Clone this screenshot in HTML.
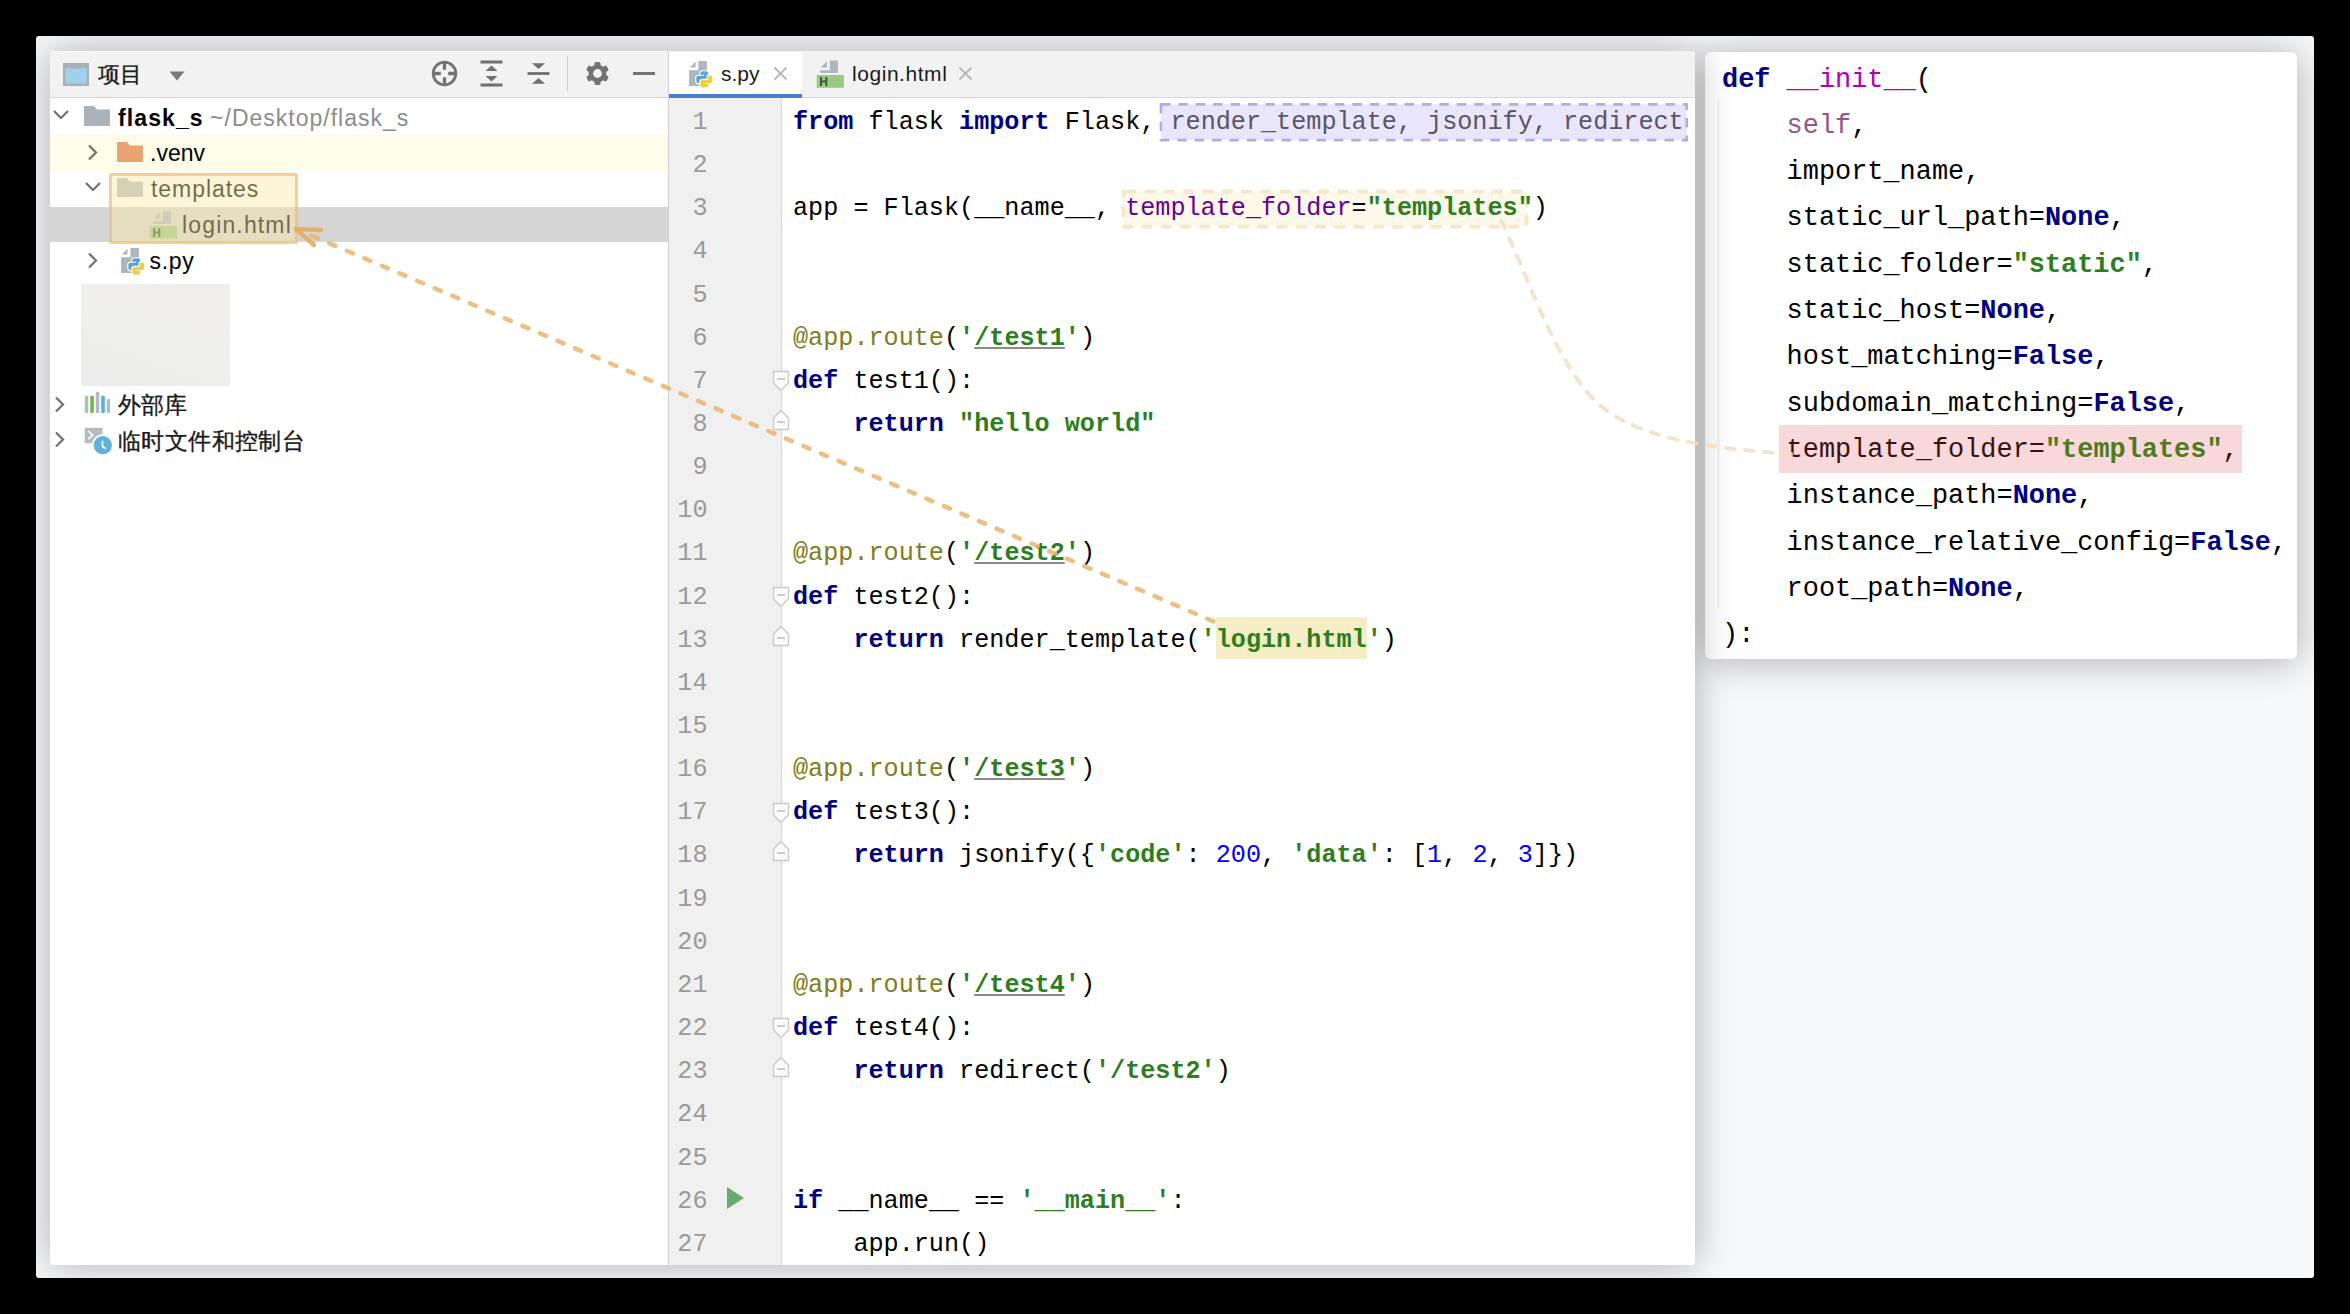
<!DOCTYPE html>
<html><head><meta charset="utf-8">
<style>
html,body{margin:0;padding:0}
body{width:2350px;height:1314px;background:#000;position:relative;overflow:hidden;font-family:"Liberation Sans",sans-serif}
.a{position:absolute}
#frame{left:36px;top:36px;width:2278px;height:1242px;background:#f7f8fa;border-radius:3px;overflow:hidden}
#mainpanel{left:50px;top:51px;width:1645px;height:1214px;background:#fff;border-radius:3px;box-shadow:0 0 38px 0 rgba(0,0,0,0.30)}
#popup{left:1705px;top:52px;width:592px;height:607px;background:#fff;border-radius:6px;box-shadow:0 2px 38px 0 rgba(0,0,0,0.30);overflow:hidden}
/* project toolbar */
#ptool{left:50px;top:51px;width:618px;height:46px;background:#f2f2f2;border-bottom:1px solid #d6d6d6;border-top-left-radius:3px}
#etool{left:669px;top:51px;width:1026px;height:46px;background:#f2f2f2;border-bottom:1px solid #d6d6d6;border-top-right-radius:3px}
#vdiv{left:668px;top:51px;width:1px;height:1214px;background:#d0d0d0}
#gutter{left:669px;top:98px;width:112px;height:1167px;background:#f0f0f0}
#gline{left:781px;top:98px;width:1px;height:1167px;background:#d9d9d9}
.gn{position:absolute;left:0;width:707.5px;text-align:right;font-family:"Liberation Mono",monospace;font-size:25.163px;line-height:43.15px;color:#9a9a9a;white-space:pre}
#gnwrap{left:0;top:0}
.cl{position:absolute;left:793.00px;font-family:"Liberation Mono",monospace;font-size:25.163px;line-height:43.15px;color:#000;white-space:pre}
.pl{position:absolute;left:1722.00px;font-family:"Liberation Mono",monospace;font-size:26.913px;line-height:46.3px;color:#000;white-space:pre}
.kw{color:#000080;font-weight:bold}
.st{color:#2f7d21;font-weight:bold}
.stu{color:#2f7d21;font-weight:bold;text-decoration:underline;text-decoration-color:#8a8a8a;text-underline-offset:2px;text-decoration-thickness:1.6px}
.sth{color:#2f7d21;font-weight:bold}
.nu{color:#0000ff}
.de{color:#7d7d22}
.ka{color:#660099}
.se{color:#94558d}
.fn{color:#b200b2}
.un{color:#595468}
.hl{color:#3a1010}
.hls{color:#4f7a1f;font-weight:bold}
.fold{position:absolute;left:772px}
.tree{position:absolute;font-size:23px;line-height:36px;white-space:pre;color:#000}
.cjk{position:absolute;font-size:23px;line-height:36px;white-space:pre;color:#1a1a1a;-webkit-text-stroke:0.35px #1a1a1a}
</style></head><body>
<div id="frame" class="a"></div>
<div id="popup" class="a"></div>
<div id="mainpanel" class="a"></div>
<div class="a" style="left:1717.5px;top:100px;width:1.2px;height:508px;background:#dcdcdc"></div>

<!-- ============ PROJECT PANEL ============ -->
<div id="ptool" class="a"></div>
<div class="a" style="left:52px;top:51px;width:614px;height:1px;background:#fafafa"></div>
<!-- project icon -->
<svg class="a" style="left:63px;top:63px" width="26" height="23" viewBox="0 0 26 23"><rect x="0" y="0" width="26" height="23" fill="#a9b1b8"/><rect x="2.5" y="5.5" width="21" height="15" fill="#9fd2ea"/></svg>
<div class="cjk" style="left:98px;top:57px;font-size:22px;color:#222">项目</div>
<svg class="a" style="left:168px;top:70px" width="18" height="12" viewBox="0 0 18 12"><path d="M1.5 1.5H16.5L9 10.5Z" fill="#7a7a7a"/></svg>
<!-- locate -->
<svg class="a" style="left:431px;top:60px" width="27" height="27" viewBox="0 0 27 27"><circle cx="13.5" cy="13.5" r="11.3" fill="none" stroke="#737373" stroke-width="2.8"/><path d="M13.5 2V9.8M13.5 17.2V25M2 13.5H9.8M17.2 13.5H25" stroke="#737373" stroke-width="3.3"/></svg>
<!-- expand all -->
<svg class="a" style="left:480px;top:60px" width="23" height="27" viewBox="0 0 23 27"><path d="M0.5 2H22.5M0.5 25H22.5" stroke="#707070" stroke-width="2.8"/><path d="M5.5 11L11.5 5.5L17.5 11Z M5.5 16L11.5 21.5L17.5 16Z" fill="#707070"/></svg>
<!-- collapse all -->
<svg class="a" style="left:527px;top:62px" width="23" height="23" viewBox="0 0 23 23"><path d="M0.5 11.5H22.5" stroke="#707070" stroke-width="2.8"/><path d="M5 1.2H18L11.5 7Z M5 21.8H18L11.5 16Z" fill="#707070"/></svg>
<div class="a" style="left:567px;top:56px;width:1px;height:35px;background:#cfcfcf"></div>
<!-- gear -->
<svg class="a" style="left:585px;top:61px" width="25" height="25" viewBox="0 0 25 25"><g fill="#737373" transform="translate(12.5 12.5)"><circle r="9"/><rect x="-3" y="-11.6" width="6" height="23.2" rx="1.6"/><rect x="-3" y="-11.6" width="6" height="23.2" rx="1.6" transform="rotate(60)"/><rect x="-3" y="-11.6" width="6" height="23.2" rx="1.6" transform="rotate(120)"/></g><circle cx="12.5" cy="12.5" r="4.4" fill="#f2f2f2"/></svg>
<div class="a" style="left:633px;top:71.8px;width:22px;height:3.4px;background:#737373"></div>

<!-- tree rows -->
<div class="a" style="left:50px;top:134.5px;width:618px;height:36px;background:#fdfce8"></div>
<div class="a" style="left:50px;top:206.5px;width:618px;height:35.5px;background:#d5d5d5"></div>
<!-- chevrons -->
<svg class="a" style="left:52px;top:108px" width="18" height="14" viewBox="0 0 18 14"><path d="M2 3L9 10L16 3" fill="none" stroke="#707070" stroke-width="2.2"/></svg>
<svg class="a" style="left:86px;top:144px" width="13" height="17" viewBox="0 0 13 17"><path d="M3 1.5L10 8.5L3 15.5" fill="none" stroke="#707070" stroke-width="2.2"/></svg>
<svg class="a" style="left:84px;top:180px" width="18" height="14" viewBox="0 0 18 14"><path d="M2 3L9 10L16 3" fill="none" stroke="#707070" stroke-width="2.2"/></svg>
<svg class="a" style="left:86px;top:252px" width="13" height="17" viewBox="0 0 13 17"><path d="M3 1.5L10 8.5L3 15.5" fill="none" stroke="#707070" stroke-width="2.2"/></svg>
<svg class="a" style="left:53px;top:396px" width="13" height="17" viewBox="0 0 13 17"><path d="M3 1.5L10 8.5L3 15.5" fill="none" stroke="#707070" stroke-width="2.2"/></svg>
<svg class="a" style="left:53px;top:431px" width="13" height="17" viewBox="0 0 13 17"><path d="M3 1.5L10 8.5L3 15.5" fill="none" stroke="#707070" stroke-width="2.2"/></svg>
<!-- folder icons -->
<svg class="a" style="left:84px;top:106px" width="26" height="20" viewBox="0 0 26 20"><path d="M0 0H10L13 3.5H26V20H0Z" fill="#aab2ba"/></svg>
<svg class="a" style="left:117px;top:141.5px" width="26" height="20" viewBox="0 0 26 20"><path d="M0 0H10L13 3.5H26V20H0Z" fill="#eaa474"/></svg>
<svg class="a" style="left:117px;top:178px" width="26" height="19" viewBox="0 0 26 19"><path d="M0 0H10L13 3.5H26V19H0Z" fill="#b7bcc2"/></svg>
<!-- html file icon -->
<svg class="a" style="left:149px;top:211.3px" width="29" height="29" viewBox="0 0 29 29"><path d="M4.8 7.5H10.9V1.2Z" fill="#adb5bd"/><path d="M13.8 0.4H21.9V13.1H4.2V10.2H13.8Z" fill="#adb5bd"/><rect x="0.7" y="15" width="27.2" height="12.8" fill="#9bc784"/><path d="M5 17.1V25.9M10.3 17.1V25.9M5 21.5H10.3" stroke="#46573a" stroke-width="2"/></svg>
<!-- python file icon -->
<svg class="a" style="left:120px;top:247.1px" width="26" height="29" viewBox="0 0 26 29"><path d="M2 7.5H7.5V1.5Z" fill="#adb5bd"/><path d="M10.4 0.9H18.9V26H1.1V10.2H10.4Z" fill="#adb5bd"/><g stroke="#fff" stroke-width="2.2" stroke-linejoin="round" paint-order="stroke"><path transform="translate(8.3 11.3)" d="M6 0H9.5Q12 0 12 2.5V6Q12 7.5 10.5 7.5H6Q4.5 7.5 4.5 9V12H2.5Q0 12 0 9.5V6.5Q0 4.5 2 4.5H7.5V3.5H4V2Q4 0 6 0Z" fill="#5fa3d6"/><path transform="translate(24.3 27.5) rotate(180)" d="M6 0H9.5Q12 0 12 2.5V6Q12 7.5 10.5 7.5H6Q4.5 7.5 4.5 9V12H2.5Q0 12 0 9.5V6.5Q0 4.5 2 4.5H7.5V3.5H4V2Q4 0 6 0Z" fill="#f4cd40"/></g></svg>
<!-- tree text -->
<div class="tree" style="left:118px;top:99.5px"><b style="letter-spacing:1.1px">flask_s</b> <span style="color:#8c8c8c;letter-spacing:1.0px">~/Desktop/flask_s</span></div>
<div class="tree" style="left:150px;top:134.5px;letter-spacing:0px">.venv</div>
<div class="tree" style="left:151px;top:170.5px;letter-spacing:0.95px">templates</div>
<div class="tree" style="left:182px;top:206.5px;letter-spacing:1.15px">login.html</div>
<div class="tree" style="left:149.5px;top:242.5px;letter-spacing:0.7px">s.py</div>
<!-- blurred box -->
<div class="a" style="left:81px;top:284px;width:149px;height:102px;background:linear-gradient(20deg,#ebeceb,#efefed 55%,#efeeea)"></div>
<!-- libraries icon -->
<svg class="a" style="left:84px;top:391px" width="27" height="23" viewBox="0 0 27 23"><g rx="1"><rect x="0.8" y="4.8" width="3.5" height="17.2" rx="1" fill="#b3bac1"/><rect x="6.3" y="4.8" width="3.5" height="17.2" rx="1" fill="#6db24a"/><rect x="11.8" y="0.8" width="3.6" height="21.2" rx="1" fill="#b3bac1"/><rect x="17.2" y="4.8" width="3.6" height="17.2" rx="1" fill="#5aaedf"/><rect x="22.7" y="8" width="3.4" height="14" rx="1" fill="#b3bac1"/></g></svg>
<div class="cjk" style="left:118px;top:387px">外部库</div>
<!-- scratches icon -->
<svg class="a" style="left:84px;top:427px" width="30" height="29" viewBox="0 0 30 29"><rect x="0.8" y="0.8" width="17.7" height="15.4" fill="#b3bac1"/><path d="M4 4L8.8 8.2L4 12.2" fill="none" stroke="#fff" stroke-width="1.6"/><circle cx="18.8" cy="18.2" r="9.1" fill="#5eb2de" stroke="#fff" stroke-width="3.6" paint-order="stroke"/><path d="M18.5 13.8V19.5L21.8 21.6" fill="none" stroke="#fff" stroke-width="1.7"/></svg>
<div class="cjk" style="left:118px;top:423px;letter-spacing:0.4px">临时文件和控制台</div>
<!-- orange highlight box -->
<div class="a" style="left:109px;top:173px;width:189px;height:71px;box-sizing:border-box;border:3px solid rgba(240,186,110,0.62);background:rgba(252,232,170,0.45);border-radius:2px"></div>

<!-- ============ EDITOR ============ -->
<div id="etool" class="a"></div>
<div class="a" style="left:669px;top:52px;width:133px;height:46px;background:#fff"></div>
<div class="a" style="left:669px;top:93.5px;width:133px;height:4.5px;background:#4a7ec6"></div>
<div id="vdiv" class="a"></div>
<!-- tab icons -->
<svg class="a" style="left:688px;top:60px" width="26" height="29" viewBox="0 0 26 29"><path d="M2 7.5H7.5V1.5Z" fill="#adb5bd"/><path d="M10.4 0.9H18.9V26H1.1V10.2H10.4Z" fill="#adb5bd"/><g stroke="#fff" stroke-width="2.2" stroke-linejoin="round" paint-order="stroke"><path transform="translate(8.3 11.3)" d="M6 0H9.5Q12 0 12 2.5V6Q12 7.5 10.5 7.5H6Q4.5 7.5 4.5 9V12H2.5Q0 12 0 9.5V6.5Q0 4.5 2 4.5H7.5V3.5H4V2Q4 0 6 0Z" fill="#5fa3d6"/><path transform="translate(24.3 27.5) rotate(180)" d="M6 0H9.5Q12 0 12 2.5V6Q12 7.5 10.5 7.5H6Q4.5 7.5 4.5 9V12H2.5Q0 12 0 9.5V6.5Q0 4.5 2 4.5H7.5V3.5H4V2Q4 0 6 0Z" fill="#f4cd40"/></g></svg>
<div class="tree" style="left:721px;top:56px;font-size:21px;color:#1a1a1a">s.py</div>
<svg class="a" style="left:773px;top:66px" width="15" height="15" viewBox="0 0 15 15"><path d="M1.5 1.5L13.5 13.5M13.5 1.5L1.5 13.5" stroke="#b8b8b8" stroke-width="1.8"/></svg>
<svg class="a" style="left:816px;top:60px" width="29" height="29" viewBox="0 0 29 29"><path d="M4.8 7.5H10.9V1.2Z" fill="#adb5bd"/><path d="M13.8 0.4H21.9V13.1H4.2V10.2H13.8Z" fill="#adb5bd"/><rect x="0.7" y="15" width="27.2" height="12.8" fill="#9bc784"/><path d="M5 17.1V25.9M10.3 17.1V25.9M5 21.5H10.3" stroke="#46573a" stroke-width="2"/></svg>
<div class="tree" style="left:852px;top:56px;font-size:21px;color:#1a1a1a;letter-spacing:0.55px">login.html</div>
<svg class="a" style="left:958px;top:66px" width="15" height="15" viewBox="0 0 15 15"><path d="M1.5 1.5L13.5 13.5M13.5 1.5L1.5 13.5" stroke="#b8b8b8" stroke-width="1.8"/></svg>

<div id="gutter" class="a"></div>
<div id="gline" class="a"></div>
<div class="gn" style="top:100.90px">1</div>
<div class="gn" style="top:144.05px">2</div>
<div class="gn" style="top:187.20px">3</div>
<div class="gn" style="top:230.35px">4</div>
<div class="gn" style="top:273.50px">5</div>
<div class="gn" style="top:316.65px">6</div>
<div class="gn" style="top:359.80px">7</div>
<div class="gn" style="top:402.95px">8</div>
<div class="gn" style="top:446.10px">9</div>
<div class="gn" style="top:489.25px">10</div>
<div class="gn" style="top:532.40px">11</div>
<div class="gn" style="top:575.55px">12</div>
<div class="gn" style="top:618.70px">13</div>
<div class="gn" style="top:661.85px">14</div>
<div class="gn" style="top:705.00px">15</div>
<div class="gn" style="top:748.15px">16</div>
<div class="gn" style="top:791.30px">17</div>
<div class="gn" style="top:834.45px">18</div>
<div class="gn" style="top:877.60px">19</div>
<div class="gn" style="top:920.75px">20</div>
<div class="gn" style="top:963.90px">21</div>
<div class="gn" style="top:1007.05px">22</div>
<div class="gn" style="top:1050.20px">23</div>
<div class="gn" style="top:1093.35px">24</div>
<div class="gn" style="top:1136.50px">25</div>
<div class="gn" style="top:1179.65px">26</div>
<div class="gn" style="top:1222.80px">27</div>
<svg class="fold" style="top:370.2px" width="18" height="22" viewBox="0 0 18 22"><path d="M1.5 1.5H16.5V13L9 20.5L1.5 13Z" fill="#fafafa" stroke="#c9c9c9" stroke-width="1.3"/><path d="M5 9H13" stroke="#bdbdbd" stroke-width="1.5"/></svg>
<svg class="fold" style="top:585.9px" width="18" height="22" viewBox="0 0 18 22"><path d="M1.5 1.5H16.5V13L9 20.5L1.5 13Z" fill="#fafafa" stroke="#c9c9c9" stroke-width="1.3"/><path d="M5 9H13" stroke="#bdbdbd" stroke-width="1.5"/></svg>
<svg class="fold" style="top:801.7px" width="18" height="22" viewBox="0 0 18 22"><path d="M1.5 1.5H16.5V13L9 20.5L1.5 13Z" fill="#fafafa" stroke="#c9c9c9" stroke-width="1.3"/><path d="M5 9H13" stroke="#bdbdbd" stroke-width="1.5"/></svg>
<svg class="fold" style="top:1017.4px" width="18" height="22" viewBox="0 0 18 22"><path d="M1.5 1.5H16.5V13L9 20.5L1.5 13Z" fill="#fafafa" stroke="#c9c9c9" stroke-width="1.3"/><path d="M5 9H13" stroke="#bdbdbd" stroke-width="1.5"/></svg>
<svg class="fold" style="top:408.9px" width="18" height="22" viewBox="0 0 18 22"><path d="M1.5 20.5H16.5V9L9 1.5L1.5 9Z" fill="#fafafa" stroke="#c9c9c9" stroke-width="1.3"/><path d="M5 13H13" stroke="#bdbdbd" stroke-width="1.5"/></svg>
<svg class="fold" style="top:624.6px" width="18" height="22" viewBox="0 0 18 22"><path d="M1.5 20.5H16.5V9L9 1.5L1.5 9Z" fill="#fafafa" stroke="#c9c9c9" stroke-width="1.3"/><path d="M5 13H13" stroke="#bdbdbd" stroke-width="1.5"/></svg>
<svg class="fold" style="top:840.4px" width="18" height="22" viewBox="0 0 18 22"><path d="M1.5 20.5H16.5V9L9 1.5L1.5 9Z" fill="#fafafa" stroke="#c9c9c9" stroke-width="1.3"/><path d="M5 13H13" stroke="#bdbdbd" stroke-width="1.5"/></svg>
<svg class="fold" style="top:1056.1px" width="18" height="22" viewBox="0 0 18 22"><path d="M1.5 20.5H16.5V9L9 1.5L1.5 9Z" fill="#fafafa" stroke="#c9c9c9" stroke-width="1.3"/><path d="M5 13H13" stroke="#bdbdbd" stroke-width="1.5"/></svg>
<!-- run icon -->
<svg class="a" style="left:727px;top:1187px" width="17" height="22" viewBox="0 0 17 22"><path d="M0 0L17 11L0 22Z" fill="#69aa70"/></svg>

<!-- code annotations behind text -->
<svg class="a" style="left:1100px;top:95px" width="600" height="140" viewBox="1100 95 600 140">
<rect x="1161" y="104.4" width="525.7" height="35.7" fill="#e9e5fa" stroke="#b5a9e8" stroke-width="2.6" stroke-dasharray="9.4 8" stroke-dashoffset="0"/>
<rect x="1123.5" y="191.5" width="403" height="35.2" fill="#fdf9ea" stroke="#f8e6cd" stroke-width="4" stroke-linecap="round" stroke-dasharray="7.5 11.8" stroke-dashoffset="-3.5"/>
</svg>

<div class="a" style="left:1216px;top:616.5px;width:151px;height:42.5px;background:#f5edc6"></div>
<div class="cl" style="top:100.90px"><span class="kw">from</span> flask <span class="kw">import</span> Flask, <span class="un">render_template, jsonify, redirect</span></div>
<div class="cl" style="top:187.20px">app = Flask(__name__, <span class="ka">template_folder</span>=<span class="st">&quot;templates&quot;</span>)</div>
<div class="cl" style="top:316.65px"><span class="de">@app.route</span>(<span class="st">&#x27;</span><span class="stu">/test1</span><span class="st">&#x27;</span>)</div>
<div class="cl" style="top:359.80px"><span class="kw">def</span> test1():</div>
<div class="cl" style="top:402.95px">    <span class="kw">return</span> <span class="st">&quot;hello world&quot;</span></div>
<div class="cl" style="top:532.40px"><span class="de">@app.route</span>(<span class="st">&#x27;</span><span class="stu">/test2</span><span class="st">&#x27;</span>)</div>
<div class="cl" style="top:575.55px"><span class="kw">def</span> test2():</div>
<div class="cl" style="top:618.70px">    <span class="kw">return</span> render_template(<span class="st">&#x27;</span><span class="sth">login.html</span><span class="st">&#x27;</span>)</div>
<div class="cl" style="top:748.15px"><span class="de">@app.route</span>(<span class="st">&#x27;</span><span class="stu">/test3</span><span class="st">&#x27;</span>)</div>
<div class="cl" style="top:791.30px"><span class="kw">def</span> test3():</div>
<div class="cl" style="top:834.45px">    <span class="kw">return</span> jsonify({<span class="st">&#x27;code&#x27;</span>: <span class="nu">200</span>, <span class="st">&#x27;data&#x27;</span>: [<span class="nu">1</span>, <span class="nu">2</span>, <span class="nu">3</span>]})</div>
<div class="cl" style="top:963.90px"><span class="de">@app.route</span>(<span class="st">&#x27;</span><span class="stu">/test4</span><span class="st">&#x27;</span>)</div>
<div class="cl" style="top:1007.05px"><span class="kw">def</span> test4():</div>
<div class="cl" style="top:1050.20px">    <span class="kw">return</span> redirect(<span class="st">&#x27;/test2&#x27;</span>)</div>
<div class="cl" style="top:1179.65px"><span class="kw">if</span> __name__ == <span class="st">&#x27;__main__&#x27;</span>:</div>
<div class="cl" style="top:1222.80px">    app.run()</div>

<!-- right side -->

<div class="a" style="left:1779px;top:425px;width:463px;height:48px;background:#f8d8da"></div>
<div class="pl" style="top:56.53px"><span class="kw">def</span> <span class="fn">__init__</span>(</div>
<div class="pl" style="top:102.83px">    <span class="se">self</span>,</div>
<div class="pl" style="top:149.13px">    import_name,</div>
<div class="pl" style="top:195.43px">    static_url_path=<span class="kw">None</span>,</div>
<div class="pl" style="top:241.73px">    static_folder=<span class="st">&quot;static&quot;</span>,</div>
<div class="pl" style="top:288.03px">    static_host=<span class="kw">None</span>,</div>
<div class="pl" style="top:334.33px">    host_matching=<span class="kw">False</span>,</div>
<div class="pl" style="top:380.63px">    subdomain_matching=<span class="kw">False</span>,</div>
<div class="pl" style="top:426.93px">    <span class="hl">template_folder=</span><span class="hls">&quot;templates&quot;</span><span class="hl">,</span></div>
<div class="pl" style="top:473.23px">    instance_path=<span class="kw">None</span>,</div>
<div class="pl" style="top:519.53px">    instance_relative_config=<span class="kw">False</span>,</div>
<div class="pl" style="top:565.83px">    root_path=<span class="kw">None</span>,</div>
<div class="pl" style="top:612.13px">):</div>

<!-- arrows overlay -->
<svg class="a" style="left:0;top:0" width="2350" height="1314" viewBox="0 0 2350 1314">
  <path d="M296 229 L1222 625" fill="none" stroke="#e9b56c" stroke-opacity="0.85" stroke-width="4.5" stroke-linecap="round" stroke-dasharray="6.6 12.5" stroke-dashoffset="2.05"/>
  <path d="M296 229 L321 230 M296 229 L314 245" fill="none" stroke="#e6ad62" stroke-opacity="0.9" stroke-width="4.5" stroke-linecap="round"/>
  <path d="M1501.0 220.0 C1527.0 274.6 1552.5 354.3 1591.1 396.6 C1626.6 435.5 1695.9 447.6 1791.5 454.0" fill="none" stroke="#f3dcc0" stroke-opacity="0.8" stroke-width="4" stroke-linecap="round" stroke-dasharray="8.6 10.6" stroke-dashoffset="18.5"/>
</svg>
</body></html>
